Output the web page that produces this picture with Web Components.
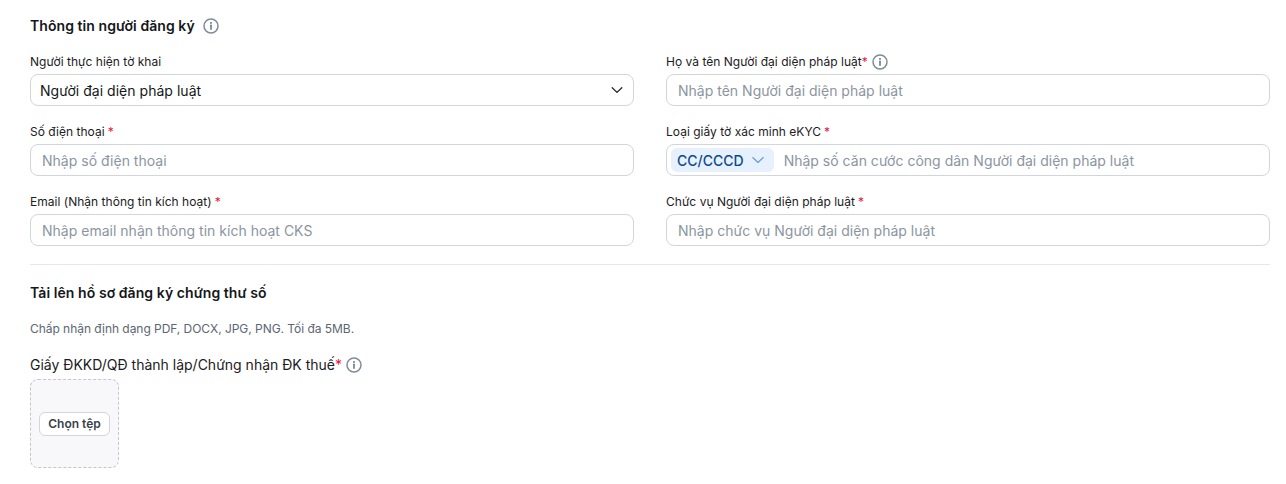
<!DOCTYPE html>
<html lang="vi">
<head>
<meta charset="utf-8">
<title>Thông tin người đăng ký</title>
<style>
  html, body { margin: 0; background: #fff; }
  body { font-family: Inter, "Noto Sans", sans-serif; color: #1c2024; overflow: hidden; }
</style>
</head>
<body>
<template id="info-tpl">
  <style>
    :host { display: inline-flex; width: 16px; height: 16px; flex: none; }
    svg { width: 16px; height: 16px; display: block; }
  </style>
  <svg viewBox="0 0 16 16" fill="none">
    <circle cx="8" cy="8" r="7" stroke="#7f8b9a" stroke-width="1.5"/>
    <path d="M8 7.2v4" stroke="#5b6672" stroke-width="1.4" stroke-linecap="round"/>
    <circle cx="8" cy="4.9" r=".9" fill="#5b6672"/>
  </svg>
</template>

<template id="section-tpl">
  <style>
    :host { display: flex; align-items: center; gap: 8px; font-size: 14px; font-weight: 600; line-height: 20px; letter-spacing: .07px; color: #14171a; }
  </style>
  <slot></slot>
</template>

<template id="field-tpl">
  <style>
    :host { display: flex; flex-direction: column; min-width: 0; }
    .label { display: flex; align-items: center; box-sizing: border-box; height: 20px; padding-top: 2px; margin-bottom: 3px; font-size: 12px; line-height: 18px; letter-spacing: .02px; color: #1c2024; }
    :host([big]) .label { font-size: 14px; letter-spacing: 0; padding-top: 0; line-height: 20px; margin-bottom: 4px; }
    .req { color: #e5143c; }
    :host([spaced]) .req { margin-left: 3px; }
    ::slotted(info-icon) { margin-left: 4px; }
  </style>
  <div class="label"><span id="t"></span><span class="req" id="r"></span><slot name="hint"></slot></div>
  <slot></slot>
</template>

<template id="input-tpl">
  <style>
    :host { display: flex; align-items: center; box-sizing: border-box; height: 32px; border: 1px solid #d3d5dc; border-radius: 8px; padding: 0 11px; font-size: 14px; color: #8b95a1; background: #fff; white-space: nowrap; overflow: hidden; }
    :host([tight]) { padding-left: 4px; }
    .ph { letter-spacing: .01px; }
    slot[name=lead]::slotted(*) { margin-right: 10px; }
  </style>
  <slot name="lead"></slot><span class="ph"><slot></slot></span>
</template>

<template id="select-tpl">
  <style>
    :host { display: flex; align-items: center; justify-content: space-between; box-sizing: border-box; height: 32px; border: 1px solid #d3d5dc; border-radius: 8px; padding: 0 9px; font-size: 14px; letter-spacing: .03px; color: #14171a; background: #fff; }
    svg { width: 14px; height: 14px; display: block; }
  </style>
  <slot></slot>
  <svg viewBox="0 0 14 14" fill="none"><path d="M2.2 4.8L7 9.4l4.8-4.6" stroke="#23282e" stroke-width="1.3" stroke-linecap="round" stroke-linejoin="round"/></svg>
</template>

<template id="tag-tpl">
  <style>
    :host { display: inline-flex; align-items: center; gap: 7px; height: 24px; box-sizing: border-box; padding: 0 9px 0 6px; border-radius: 6px; background: #e6f1fd; color: #0b4a8f; font-size: 14px; font-weight: 500; }
    svg { width: 14px; height: 14px; display: block; }
  </style>
  <slot></slot>
  <svg viewBox="0 0 14 14" fill="none"><path d="M1.8 4.6L7 9.4l5.2-4.8" stroke="#6f9fd6" stroke-width="1.3" stroke-linecap="round" stroke-linejoin="round"/></svg>
</template>

<template id="upload-tpl">
  <style>
    :host { display: flex; align-items: center; justify-content: center; box-sizing: border-box; width: 89px; height: 89px; border: 1px dashed #c4c6cd; border-radius: 8px; background: #f8f8fa; }
    button { all: unset; box-sizing: border-box; display: flex; align-items: center; height: 24px; padding: 0 8px; border: 1px solid #d3d5dc; border-radius: 6px; background: #fff; font: 600 12px Inter, "Noto Sans", sans-serif; color: #3a4149; white-space: nowrap; }
  </style>
  <button><slot></slot></button>
</template>

<template id="page-tpl">
  <style>
    :host { display: block; padding: 16px 16px 0 30px; width: 1286px; box-sizing: border-box; }
    .grid { display: grid; grid-template-columns: 604px 604px; column-gap: 32px; row-gap: 15px; margin-top: 15px; }
    hr { border: 0; height: 1px; background: #e6e7ea; margin: 18px 0 18px; }
    .hint { font-size: 12px; line-height: 18px; letter-spacing: -.04px; color: #5b6672; margin: 17px 0 17px; }
  </style>
  <reg-section>Thông tin người đăng ký <info-icon></info-icon></reg-section>
  <div class="grid">
    <reg-field label="Người thực hiện tờ khai">
      <reg-select>Người đại diện pháp luật</reg-select>
    </reg-field>
    <reg-field label="Họ và tên Người đại diện pháp luật" required>
      <info-icon slot="hint"></info-icon>
      <reg-input>Nhập tên Người đại diện pháp luật</reg-input>
    </reg-field>
    <reg-field label="Số điện thoại" required spaced>
      <reg-input>Nhập số điện thoại</reg-input>
    </reg-field>
    <reg-field label="Loại giấy tờ xác minh eKYC" required spaced>
      <reg-input tight><reg-tag slot="lead">CC/CCCD</reg-tag>Nhập số căn cước công dân Người đại diện pháp luật</reg-input>
    </reg-field>
    <reg-field label="Email (Nhận thông tin kích hoạt)" required spaced>
      <reg-input>Nhập email nhận thông tin kích hoạt CKS</reg-input>
    </reg-field>
    <reg-field label="Chức vụ Người đại diện pháp luật" required spaced>
      <reg-input>Nhập chức vụ Người đại diện pháp luật</reg-input>
    </reg-field>
  </div>
  <hr>
  <reg-section>Tải lên hồ sơ đăng ký chứng thư số</reg-section>
  <div class="hint">Chấp nhận định dạng PDF, DOCX, JPG, PNG. Tối đa 5MB.</div>
  <reg-field big label="Giấy ĐKKD/QĐ thành lập/Chứng nhận ĐK thuế" required>
    <info-icon slot="hint"></info-icon>
    <reg-upload>Chọn tệp</reg-upload>
  </reg-field>
</template>

<reg-page></reg-page>

<script>
  // Base class: clones the template with the given id into an open shadow root
  class TplElement extends HTMLElement {
    constructor(id) {
      super();
      this.attachShadow({ mode: 'open' });
      this.shadowRoot.appendChild(document.getElementById(id).content.cloneNode(true));
    }
  }

  class InfoIcon extends TplElement { constructor() { super('info-tpl'); } }
  class RegSection extends TplElement { constructor() { super('section-tpl'); } }
  class RegInput extends TplElement { constructor() { super('input-tpl'); } }
  class RegSelect extends TplElement { constructor() { super('select-tpl'); } }
  class RegTag extends TplElement { constructor() { super('tag-tpl'); } }
  class RegUpload extends TplElement { constructor() { super('upload-tpl'); } }
  class RegPage extends TplElement { constructor() { super('page-tpl'); } }

  class RegField extends TplElement {
    constructor() { super('field-tpl'); }
    connectedCallback() {
      this.shadowRoot.getElementById('t').textContent = this.getAttribute('label');
      this.shadowRoot.getElementById('r').textContent = this.hasAttribute('required') ? '*' : '';
    }
  }

  customElements.define('info-icon', InfoIcon);
  customElements.define('reg-section', RegSection);
  customElements.define('reg-input', RegInput);
  customElements.define('reg-select', RegSelect);
  customElements.define('reg-tag', RegTag);
  customElements.define('reg-upload', RegUpload);
  customElements.define('reg-field', RegField);
  customElements.define('reg-page', RegPage);
</script>
</body>
</html>
